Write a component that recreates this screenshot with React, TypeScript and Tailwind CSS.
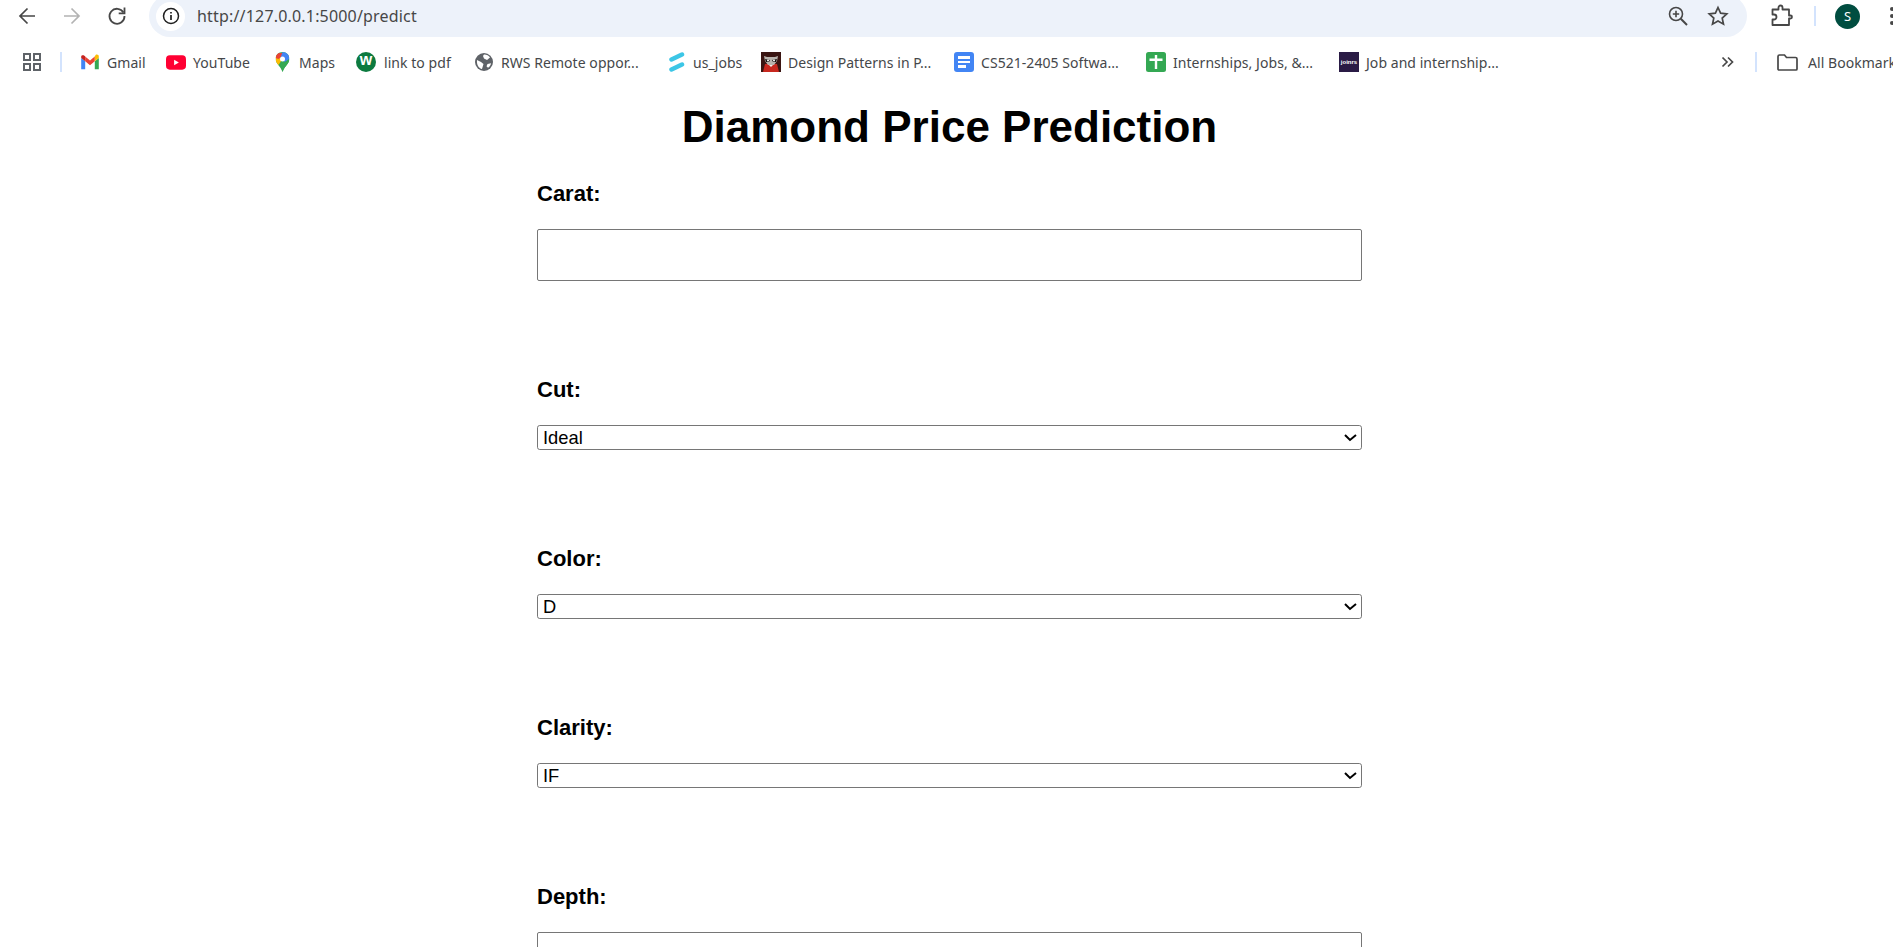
import React from "react";

const uiFont = "font-['Noto_Sans',sans-serif]";

function Bookmark({ width, icon, label, gap = "ml-[7px]" }: { width: string; icon: React.ReactNode; label: string; gap?: string }) {
  return (
    <div className={`flex items-center shrink-0 ${width}`}>
      <div className="w-[20px] h-[20px] flex items-center justify-center shrink-0">{icon}</div>
      <span className={`${gap} mt-[1px] text-[14px] leading-[20px] tracking-[0.05px] text-[#45474a] whitespace-nowrap ${uiFont}`}>{label}</span>
    </div>
  );
}

const Gmail = (
  <svg width="20" height="16" viewBox="0 0 24 20">
    <path d="M1 19h5V9L1 5z" fill="#4285F4" />
    <path d="M18 19h5V5l-5 4z" fill="#34A853" />
    <path d="M6 9V3l6 5 6-5v6l-6 5z" fill="#EA4335" />
    <path d="M18 3v6l5-4V3c0-2-2.300-3-4-1.700z" fill="#FBBC04" />
    <path d="M1 5l5 4V3L5 2.300C3.300 1 1 2 1 3z" fill="#C5221F" />
  </svg>
);
const YouTube = (
  <svg width="21" height="15" viewBox="0 0 21 15">
    <rect width="21" height="15" rx="4" fill="#FF0033" />
    <path d="M8.500 4.500v6l5-3z" fill="#fff" />
  </svg>
);
const Maps = (
  <svg className="-ml-[2px]" width="15" height="20" viewBox="0 0 14 20">
    <defs>
      <clipPath id="pin">
        <path d="M7 0C3 0 0 3 0 7c0 4.500 5 7 7 13 2-6 7-8.500 7-13 0-4-3-7-7-7z" />
      </clipPath>
    </defs>
    <g clipPath="url(#pin)">
      <rect width="14" height="20" fill="#34A853" />
      <path d="M0 11V4l7 3-4 6z" fill="#FBBC04" />
      <path d="M1 1h6l3 1-7 5-3-1z" fill="#EA4335" />
      <path d="M7 0h7v7L9 10 5 6z" fill="#4285F4" />
      <path d="M14 7v5l-6 8H7L5 13z" fill="#34A853" opacity="0.9" />
      <circle cx="7" cy="7" r="2.500" fill="#fff" />
    </g>
  </svg>
);
const WLogo = (
  <div className="w-[20px] h-[20px] rounded-full bg-[#0c7a3f] flex items-center justify-center">
    <span className="text-white text-[16px] leading-none font-bold font-['Liberation_Sans',sans-serif] -mt-[4px]">w</span>
  </div>
);
const Globe = (
  <svg width="18" height="18" viewBox="0 0 18 18">
    <circle cx="9" cy="9" r="9" fill="#5f6368" />
    <path d="M9 1.500c2-.2 5 1 6 3l-3 2.500-3-1.500-1-2.500zM2 7l4 2 2.500 2-1.500 5C4 15.500 1.500 12 2 7zM12.500 11l3.500-.8c-.3 2-1.500 3.500-3 4.500l-1.500-1.500z" fill="#fff" />
  </svg>
);
const UsJobs = (
  <svg className="-ml-[2px]" width="16" height="20" viewBox="0 0 16 20">
    <path d="M2.500 7.500L13 2.500M2.500 17.500L13 12.500" stroke="#3cc6e6" strokeWidth="4.500" strokeLinecap="round" fill="none" />
  </svg>
);
const Raccoon = (
  <svg width="20" height="20" viewBox="0 0 20 20">
    <rect width="20" height="20" fill="#3a1512" />
    <path d="M2 20l2-8h12l2 8z" fill="#c8281f" />
    <path d="M3 4l3 1h8l3-1-1 5-3 4H7L4 9z" fill="#b9b4ae" />
    <path d="M4 7l5 1-1 2H5zM16 7l-5 1 1 2h3z" fill="#1c1412" />
    <circle cx="7" cy="8.500" r="1" fill="#fff" />
    <circle cx="13" cy="8.500" r="1" fill="#fff" />
    <path d="M8 13h4l-2 2z" fill="#f1eeea" />
  </svg>
);
const Docs = (
  <div className="w-[20px] h-[20px] rounded-[3px] bg-[#4285f4] flex flex-col justify-center gap-[2px] px-[4px]">
    <div className="h-[2.500px] w-full bg-white" />
    <div className="h-[2.500px] w-full bg-white" />
    <div className="h-[2.500px] w-[8px] bg-white" />
  </div>
);
const Sheets = (
  <svg width="20" height="20" viewBox="0 0 20 20">
    <rect width="20" height="20" rx="2.500" fill="#34a853" />
    <path d="M3.500 6.500h5.300V3h2.400v3.500h5.300V9h-5.300v8H8.800V9H3.500z" fill="#fff" />
  </svg>
);
const Joinrs = (
  <div className="w-[20px] h-[20px] bg-[#2a1b45] flex items-center justify-center overflow-hidden">
    <span className="text-white text-[6px] leading-none font-bold font-['Liberation_Sans',sans-serif]">joinrs</span>
  </div>
);

function Field({ label, children, first }: { label: string; children: React.ReactNode; first?: boolean }) {
  return (
    <div className={first ? "flex flex-col" : "flex flex-col mt-[96px]"}>
      <label className="block h-[24px] pt-[1px] mb-[24px] text-[22px] leading-[24px] font-bold text-black">{label}</label>
      {children}
    </div>
  );
}

const inputCls = "block w-full h-[52px] border border-[#767676] rounded-[2px] bg-white";
const selectCls = "block w-[600px] h-[18.200px] [zoom:1.375] border border-[#767676] rounded-[2px] bg-white text-[13.333px] text-black";

export default function App() {
  return (
    <div className="h-screen w-full overflow-hidden bg-white font-['Liberation_Sans',Arial,sans-serif]">
      {/* toolbar */}
      <div className="flex items-center h-[42px] -mt-[5px]">
        <svg className="ml-[15px] shrink-0" width="24" height="24" viewBox="0 0 24 24" fill="none" stroke="#474747" strokeWidth="1.700">
          <path d="M20 12H5M12.500 4.500L5 12l7.500 7.500" />
        </svg>
        <svg className="ml-[21px] shrink-0" width="24" height="24" viewBox="0 0 24 24" fill="none" stroke="#b3b3b3" strokeWidth="1.700">
          <path d="M4 12h15M11.500 4.500L19 12l-7.500 7.500" />
        </svg>
        <svg className="ml-[21px] shrink-0" width="24" height="24" viewBox="0 0 24 24" fill="none" stroke="#474747" strokeWidth="1.800">
          <path d="M18.500 8.500A7.500 7.500 0 1 0 19.500 12" />
          <path d="M19.500 3.500v5.800h-5.800" />
        </svg>
        <div className="ml-[20px] w-[1598px] h-[42px] rounded-[21px] bg-[#edf2fa] flex items-center shrink-0 pl-[7px]">
          <div className="w-[29px] h-[29px] rounded-full bg-white flex items-center justify-center shrink-0">
            <svg width="18" height="18" viewBox="0 0 18 18" fill="none" stroke="#1f1f1f" strokeWidth="1.500">
              <circle cx="9" cy="9" r="7.500" />
              <path d="M9 8v5M9 5v1.600" strokeWidth="1.700" />
            </svg>
          </div>
          <span className={`ml-[12px] text-[16px] leading-[20px] tracking-[0.18px] text-[#474747] whitespace-nowrap ${uiFont}`}>
            http://127.0.0.1:5000/predict
          </span>
          <svg className="ml-auto shrink-0" width="22" height="22" viewBox="0 0 22 22" fill="none" stroke="#474747" strokeWidth="1.600">
            <circle cx="9" cy="9" r="6.500" />
            <path d="M13.800 13.800L20 20" strokeWidth="2" />
            <path d="M5.800 9h6.400M9 5.800v6.400" />
          </svg>
          <svg className="ml-[18px] mr-[18px] shrink-0" width="22" height="22" viewBox="0 0 22 22" fill="none" stroke="#474747" strokeWidth="1.700">
            <path d="M11 2.500l2.600 5.700 6.200.7-4.600 4.200 1.300 6.100L11 16.100l-5.500 3.100 1.300-6.100-4.600-4.200 6.200-.7z" />
          </svg>
        </div>
        <svg className="ml-[22px] shrink-0" width="24" height="24" viewBox="0 0 24 24" fill="none" stroke="#474747" strokeWidth="1.800" strokeLinejoin="round">
          <path d="M3.500 5.500h6V3.500a2 2 0 0 1 4 0v2h6.500v6h1.500a1.500 1.500 0 0 1 0 3H20v6.500H3.500v-5.500h1.500a2.500 2.500 0 0 0 0-5H3.500z" />
        </svg>
        <div className="ml-[21px] w-[2px] h-[20px] bg-[#d3e3fd] shrink-0" />
        <div className="ml-[19px] w-[25px] h-[25px] rounded-full bg-[#004d40] flex items-center justify-center shrink-0">
          <span className={`text-white text-[13px] leading-none ${uiFont}`}>S</span>
        </div>
        <div className="ml-[30px] flex flex-col gap-[3px] shrink-0">
          <div className="w-[4px] h-[4px] rounded-full bg-[#474747]" />
          <div className="w-[4px] h-[4px] rounded-full bg-[#474747]" />
          <div className="w-[4px] h-[4px] rounded-full bg-[#474747]" />
        </div>
      </div>

      {/* bookmarks */}
      <div className="flex items-center h-[50px] pl-[23px] overflow-hidden">
        <svg className="shrink-0" width="18" height="18" viewBox="0 0 18 18" fill="none" stroke="#5f6368" strokeWidth="2">
          <rect x="1" y="1" width="6" height="6" />
          <rect x="11" y="1" width="6" height="6" />
          <rect x="1" y="11" width="6" height="6" />
          <rect x="11" y="11" width="6" height="6" />
        </svg>
        <div className="ml-[19px] w-[2px] h-[20px] bg-[#d3e3fd] shrink-0" />
        <div className="ml-[18px] flex items-center shrink-0">
          <Bookmark width="w-[86px]" icon={Gmail} label="Gmail" />
          <Bookmark width="w-[107px]" icon={YouTube} label="YouTube" />
          <Bookmark width="w-[83px]" icon={Maps} label="Maps" gap="ml-[6px]" />
          <Bookmark width="w-[118px]" icon={WLogo} label="link to pdf" gap="ml-[8px]" />
          <Bookmark width="w-[194px]" icon={Globe} label="RWS Remote oppor..." />
          <Bookmark width="w-[93px]" icon={UsJobs} label="us_jobs" gap="ml-[5px]" />
          <Bookmark width="w-[193px]" icon={Raccoon} label="Design Patterns in P..." />
          <Bookmark width="w-[192px]" icon={Docs} label="CS521-2405 Softwa..." />
          <Bookmark width="w-[193px]" icon={Sheets} label="Internships, Jobs, &..." />
          <Bookmark width="w-[383px]" icon={Joinrs} label="Job and internship..." />
        </div>
        <svg className="-ml-[1px] shrink-0" width="13" height="12" viewBox="0 0 13 12" fill="none" stroke="#474747" strokeWidth="1.700">
          <path d="M1.500 1.500L6 6l-4.500 4.500M7 1.500L11.500 6 7 10.500" />
        </svg>
        <div className="ml-[21px] w-[2px] h-[20px] bg-[#d3e3fd] shrink-0" />
        <svg className="ml-[20px] shrink-0" width="21" height="17" viewBox="0 0 21 17" fill="none" stroke="#474747" strokeWidth="1.700">
          <path d="M1 2.500A1.500 1.500 0 0 1 2.500 1h5l2 2.500h9A1.500 1.500 0 0 1 20 5v10a1 1 0 0 1-1 1H2a1 1 0 0 1-1-1z" />
        </svg>
        <span className={`ml-[10px] mt-[1px] text-[14px] leading-[20px] text-[#45474a] whitespace-nowrap tracking-[0.05px] ${uiFont}`}>All Bookmarks</span>
      </div>

      {/* page */}
      <main className="ml-[537px] w-[825px]">
        <h1 className="mt-[14px] mb-[28px] h-[52px] text-center text-[44px] leading-[52px] font-bold text-black whitespace-nowrap">
          Diamond Price Prediction
        </h1>
        <form className="flex flex-col">
          <Field label="Carat:" first>
            <input type="text" className={inputCls} />
          </Field>
          <Field label="Cut:">
            <select className={selectCls} defaultValue="Ideal">
              <option>Ideal</option>
              <option>Premium</option>
              <option>Very Good</option>
              <option>Good</option>
              <option>Fair</option>
            </select>
          </Field>
          <Field label="Color:">
            <select className={selectCls} defaultValue="D">
              <option>D</option>
              <option>E</option>
              <option>F</option>
              <option>G</option>
              <option>H</option>
              <option>I</option>
              <option>J</option>
            </select>
          </Field>
          <Field label="Clarity:">
            <select className={selectCls} defaultValue="IF">
              <option>IF</option>
              <option>VVS1</option>
              <option>VVS2</option>
              <option>VS1</option>
              <option>VS2</option>
              <option>SI1</option>
              <option>SI2</option>
              <option>I1</option>
            </select>
          </Field>
          <Field label="Depth:">
            <input type="text" className={inputCls} />
          </Field>
        </form>
      </main>
    </div>
  );
}
